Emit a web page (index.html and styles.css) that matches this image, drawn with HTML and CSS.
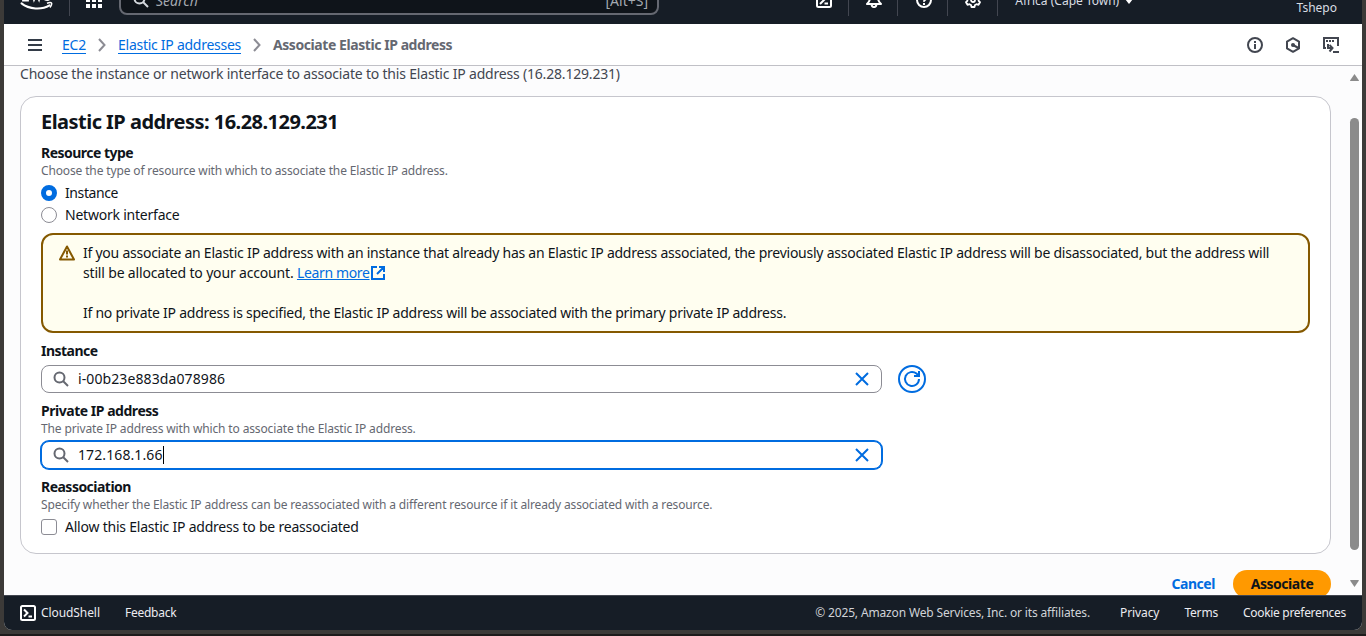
FILE: index.html
```
<!DOCTYPE html>
<html lang="en">
<head>
<meta charset="utf-8">
<title>Associate Elastic IP address | EC2</title>
<link rel="stylesheet" href="styles.css">
</head>
<body>
<div class="window">
  <nav class="nav">
    <div class="nav-row">
      <svg class="nav-logo" width="34" height="22" viewBox="0 0 34 22"><path d="M3 4v7.500h5V4M12 4l2 7 2.500-6 2.500 6 2-7M24 10q4 2.500 6-.5" fill="none" stroke="#fff" stroke-width="1.800"/><path d="M1.500 14.400C9 20.500 22 21 29.500 16.300" fill="none" stroke="#fff" stroke-width="2" stroke-linecap="round"/><path d="M27 14.300c2-.8 4-.8 4.500-.3s0 2.800-1.600 4.500" fill="none" stroke="#fff" stroke-width="1.500"/></svg>
      <span class="sep sep-logo"></span>
      <svg class="nav-grid" width="16" height="16" viewBox="0 0 16 16" fill="#fff"><path d="M0 0h4v4H0zM6 0h4v4H6zM12 0h4v4h-4zM0 6h4v4H0zM6 6h4v4H6zM12 6h4v4h-4zM0 12h4v4H0zM6 12h4v4H6zM12 12h4v4h-4z"/></svg>
      <div class="nav-search">
        <svg width="16" height="16" viewBox="0 0 16 16" fill="none" stroke="#d5d9de" stroke-width="2"><circle cx="6.500" cy="6.500" r="5"/><path d="M10 10l5 5"/></svg>
        <span class="nav-placeholder">Search</span><span class="nav-key">[Alt+S]</span>
      </div>
      <div class="nav-tools">
        <span class="tool"><svg width="16" height="16" viewBox="0 0 16 16" fill="none" stroke="#fff" stroke-width="2"><rect x="1" y="1" width="14" height="14" rx="1.500"/><path d="M4 4l4 4-4 4M8.500 11.500H12"/></svg></span>
        <span class="tool"><svg width="16" height="16" viewBox="0 0 16 16" fill="none" stroke="#fff" stroke-width="2" stroke-linejoin="round"><path d="M8 1C5 1 4 3.500 4 6c0 3-1 4-3 6h14c-2-2-3-3-3-6 0-2.500-1-5-4-5z"/><path d="M5.500 12.500C6 16 10 16 10.500 12.500"/></svg></span>
        <span class="tool"><svg width="16" height="16" viewBox="0 0 16 16" fill="none" stroke="#fff" stroke-width="2"><circle cx="8" cy="8" r="7"/><path d="M5.800 6.500C5.800 3.200 10.500 3.700 10.200 6.300 10 8 8 7.500 8 9.800M8 11v2"/></svg></span>
        <span class="tool"><svg width="16" height="16" viewBox="0 0 16 16" fill="none" stroke="#fff" stroke-width="1.800" stroke-linejoin="round"><path d="M6.500 1h3l.5 2 1.500.8 2-.6 1.500 2.600L13.600 7.200v1.600L15 10.200l-1.500 2.600-2-.6-1.500.8-.5 2h-3L6 13l-1.500-.8-2 .6L1 10.200l1.400-1.400V7.200L1 5.800l1.500-2.600 2 .6L6 3z"/><circle cx="8" cy="8" r="2"/></svg></span>
        <span class="region">Africa (Cape Town)</span><i class="caret"></i>
      </div>
      <span class="user">Tshepo</span>
    </div>
  </nav>

  <header class="crumbs">
    <svg class="menu" width="14" height="12" viewBox="0 0 14 12" fill="#333b47"><path d="M0 0h14v2H0zM0 5h14v2H0zM0 10h14v2H0z"/></svg>
    <a class="crumb ec2">EC2</a>
    <svg class="chev" width="8" height="14" viewBox="0 0 8 14"><path d="M1 1l5.500 6L1 13" fill="none" stroke="#8c8c94" stroke-width="2"/></svg>
    <a class="crumb eips">Elastic IP addresses</a>
    <svg class="chev" width="8" height="14" viewBox="0 0 8 14"><path d="M1 1l5.500 6L1 13" fill="none" stroke="#8c8c94" stroke-width="2"/></svg>
    <span class="crumb-now">Associate Elastic IP address</span>
    <div class="header-icons">
      <svg width="16" height="16" viewBox="0 0 16 16" fill="none" stroke="#424650" stroke-width="2"><circle cx="8" cy="8" r="7"/><path d="M8 4v2M8 7v5" /></svg>
      <svg width="16" height="16" viewBox="0 0 16 16" fill="none" stroke="#424650" stroke-width="2"><path d="M8 1.200l6 3.400v6.800l-6 3.400-6-3.400V4.600z" stroke-linejoin="round"/><circle cx="8" cy="8" r="2" fill="#424650" stroke="none"/><path d="M8 8l5.500 3"/></svg>
      <svg width="16" height="16" viewBox="0 0 16 16" fill="none" stroke="#424650" stroke-width="2"><path d="M3 11H1V1h14v8"/><path d="M3 4h2M6 4h2M9 4h2" /><path d="M5 7v4h4M6.500 8l3 3-3 3.500M10 15h6"/></svg>
    </div>
  </header>

  <main class="main">
    <div class="content">
      <p class="intro"><span>Choose the instance or network interface to associate to this Elastic IP address (16.28.129.231)</span></p>
      <section class="card">
        <h2>Elastic IP address: 16.28.129.231</h2>
        <h3 class="l-type">Resource type</h3>
        <p class="hint h-type">Choose the type of resource with which to associate the Elastic IP address.</p>
        <div class="choice"><i class="radio on"></i><span class="opt-instance">Instance</span></div>
        <div class="choice second"><i class="radio"></i><span>Network interface</span></div>
        <div class="alert">
          <svg width="16" height="16" viewBox="0 0 16 16" fill="none" stroke="#855900" stroke-width="2" stroke-linejoin="round"><path d="M8 1.500L15 14.500H1z"/><path d="M8 5.500v4M8 10.500v2"/></svg>
          <div class="alert-text">
            <p class="a1">If you associate an Elastic IP address with an instance that already has an Elastic IP address associated, the previously associated Elastic IP address will be disassociated, but the address will</p>
            <p><span class="a2">still be allocated to your account. </span><a class="learn">Learn more</a><svg class="ext" width="14" height="14" viewBox="0 0 14 14" fill="none" stroke="#006ce0" stroke-width="2"><path d="M6 1H1v12h12V8M8 1h5v5M13 1L6 8"/></svg></p>
            <p class="a3">If no private IP address is specified, the Elastic IP address will be associated with the primary private IP address.</p>
          </div>
        </div>
        <h3 class="l-inst">Instance</h3>
        <div class="field-row">
          <div class="field">
            <svg width="16" height="16" viewBox="0 0 16 16" fill="none" stroke="#656871" stroke-width="2"><circle cx="6.500" cy="6.500" r="5"/><path d="M10 10l5 5"/></svg>
            <span class="v-inst">i-00b23e883da078986</span>
            <svg class="clear" width="16" height="16" viewBox="0 0 16 16"><path d="M2 2l12 12M14 2L2 14" stroke="#006ce0" stroke-width="2"/></svg>
          </div>
          <div class="refresh"><svg width="18" height="18" viewBox="0 0 18 18" fill="none" stroke="#006ce0" stroke-width="2"><path d="M16 9a7 7 0 1 1-2.500-5.400L15.500 5.500M16 1v5h-5"/></svg></div>
        </div>
        <h3 class="l-priv">Private IP address</h3>
        <p class="hint h-priv">The private IP address with which to associate the Elastic IP address.</p>
        <div class="field focus">
          <svg width="16" height="16" viewBox="0 0 16 16" fill="none" stroke="#656871" stroke-width="2"><circle cx="6.500" cy="6.500" r="5"/><path d="M10 10l5 5"/></svg>
          <span class="v-ip">172.168.1.66</span><i class="cursor"></i>
          <svg class="clear" width="16" height="16" viewBox="0 0 16 16"><path d="M2 2l12 12M14 2L2 14" stroke="#006ce0" stroke-width="2"/></svg>
        </div>
        <h3 class="l-re">Reassociation</h3>
        <p class="hint h-re">Specify whether the Elastic IP address can be reassociated with a different resource if it already associated with a resource.</p>
        <div class="choice"><i class="check"></i><span class="allow">Allow this Elastic IP address to be reassociated</span></div>
      </section>
      <div class="actions"><a class="cancel">Cancel</a><span class="primary"><span>Associate</span></span></div>
    </div>
    <div class="scrollbar"><svg width="9" height="7" viewBox="0 0 9 7"><path d="M4.500 0L9 6.500Q9 7 8 7H1Q0 7 0 6.500z" fill="#8b8b8b"/></svg><div class="thumb"></div><svg width="9" height="7" viewBox="0 0 9 7"><path d="M4.500 7L9 .5Q9 0 8 0H1Q0 0 0 .5z" fill="#8b8b8b"/></svg></div>
  </main>

  <footer class="footer">
    <svg width="16" height="16" viewBox="0 0 16 16" fill="none" stroke="#fff" stroke-width="2"><rect x="1" y="1" width="14" height="14" rx="1.500"/><path d="M4 4.500L7.500 8 4 11.500M8.500 11.500H12"/></svg>
    <span class="shell">CloudShell</span><span class="feedback">Feedback</span>
    <span class="copy">© 2025, Amazon Web Services, Inc. or its affiliates.</span>
    <span class="privacy">Privacy</span><span class="terms">Terms</span><span class="cookies">Cookie preferences</span>
  </footer>
</div>
</body>
</html>
```
FILE: styles.css
```
* { box-sizing: border-box; }
body { margin: 0; height: 636px; overflow: hidden; background: #3c3a38; border-bottom: 2px solid #1d1b1b; font: 14px/20px "Noto Sans", sans-serif; color: #0f141a; }
p, h2, h3 { margin: 0; white-space: nowrap; }
svg { display: block; flex: none; }
span, a { white-space: nowrap; }
.window { margin: 0 4px; height: 630px; display: flex; flex-direction: column; background: #fcfcfd; border-radius: 0 0 8px 8px; overflow: hidden; }

.nav { flex: none; height: 24px; background: #161d26; color: #d9dde3; overflow: hidden; font-size: 12px; }
.nav-row { display: flex; align-items: center; height: 32px; margin-top: -16px; }
.nav-logo { margin: 0 0 0 16px; }
.sep-logo { width: 1px; height: 32px; background: #424650; margin-left: 15px; }
.nav-grid { margin-left: 16px; }
.nav-search { display: flex; align-items: center; width: 540px; height: 30px; margin-left: 17px; padding: 0 9px 0 12px; border: 2px solid #656871; border-radius: 8px; background: #0f141a; font-size: 14px; }
.nav-placeholder { margin: 2px 0 0 7px; font-style: italic; color: #a4a9b0; }
.nav-key { margin: 2px 0 0 auto; color: #a4a9b0; }
.nav-tools { display: flex; align-items: center; margin-left: 140px; }
.tool { display: flex; justify-content: center; align-items: center; width: 49.700px; height: 32px; padding-left: 2px; border-right: 1px solid #424650; }
.region { margin: 1px 0 0 17.500px; font-size: 12px; }
.caret { margin: 2px 0 0 6px; border: 4px solid transparent; border-top: 5px solid #fff; border-bottom: 0; }
.user { margin: 16px 25px 0 auto; }

.crumbs { flex: none; height: 42px; display: flex; align-items: center; padding: 0 23px 0 24px; background: #fff; border-bottom: 1px solid #c0c0c6; }
.crumb { margin-left: 20px; height: 18px; line-height: 18px; color: #006ce0; border-bottom: 1px solid #006ce0; }
.ec2 { letter-spacing: -.2px; }
.eips { letter-spacing: -.27px; }
.chev { margin: 0 0 0 12px; }
.chev + .crumb, .crumb-now { margin-left: 12px; }
.crumb-now { font-weight: 700; color: #656871; letter-spacing: -.43px; }
.header-icons { display: flex; gap: 22px; margin-left: auto; }

.main { flex: 1; min-height: 0; display: flex; overflow: hidden; }
.content { width: 1327px; padding-left: 16px; }
.intro { margin-top: -2px; color: #424650; letter-spacing: -.19px; }
.card { height: 458px; margin-top: 12px; padding: 13px 20px; background: #fff; border: 1px solid #c6c6cd; border-radius: 16px; }
h2 { font-size: 20px; line-height: 24px; font-weight: 700; letter-spacing: -.53px; }
h3 { font-size: 14px; line-height: 20px; font-weight: 700; margin-top: 8px; letter-spacing: -.52px; }
.l-priv { letter-spacing: -.47px; }
.card h2 + h3 { margin-top: 9px; }
.hint { font-size: 12px; line-height: 16px; color: #656871; letter-spacing: -.14px; }
.choice { display: flex; align-items: center; gap: 8px; height: 20px; margin-top: 4px; letter-spacing: -.22px; }
.opt-instance { letter-spacing: -.4px; }
.second { margin-top: 2px; }
.radio, .check { width: 16px; height: 16px; border: 1px solid #8c8c94; border-radius: 50%; background: #fff; }
.radio.on { border: 5px solid #006ce0; }
.check { border-radius: 3px; }
.alert { display: flex; height: 100px; margin-top: 8px; padding: 8px 16px; border: 2px solid #855900; border-radius: 12px; background: #fffef0; }
.alert > svg { margin-top: 2px; }
.alert-text { margin-left: 8px; letter-spacing: -.245px; }
.alert-text p { display: flex; white-space: pre; }
.a2 { white-space: pre; letter-spacing: -.17px; }
.a3 { margin-top: 20px; }
.learn { color: #006ce0; text-decoration: underline; letter-spacing: -.35px; }
.ext { margin: 3px 0 0 1px; }
.field-row { display: flex; gap: 16px; margin-top: 4px; }
.field { display: flex; align-items: center; width: 841px; height: 28px; padding: 0 11px; border: 1px solid #8c8c94; border-radius: 8px; background: #fff; }
.field > span { margin-left: 9px; letter-spacing: .1px; }
.clear { margin-left: auto; }
.focus { margin-top: 4px; border-color: #006ce0; box-shadow: 0 0 0 1px #006ce0; }
.cursor { width: 1px; height: 18px; background: #000; }
.refresh { width: 28px; height: 28px; border: 2px solid #006ce0; border-radius: 50%; display: grid; place-items: center; }
.actions { display: flex; justify-content: flex-end; align-items: center; height: 28px; margin-top: 16px; font-weight: 700; letter-spacing: -.45px; }
.cancel { color: #006ce0; margin-right: 18px; }
.primary { width: 98px; height: 28px; line-height: 28px; border-radius: 20px; background: #ff9900; text-align: center; }
.scrollbar { display: flex; flex-direction: column; margin: 8px 3px 8px auto; height: 513px; }
.thumb { width: 9px; height: 432px; margin: 37px 0 auto; border-radius: 5px; background: #8b8b8b; }

.footer { flex: none; height: 35px; display: flex; align-items: center; padding: 0 16px; background: #161d26; border-top: 1px solid #424650; color: #ebebf0; font-size: 12px; }
.shell { margin-left: 5px; letter-spacing: -.08px; }
.feedback { margin-left: 25px; letter-spacing: -.25px; }
.copy { margin-left: auto; color: #d0d3d8; letter-spacing: -.15px; }
.privacy { margin-left: 30px; letter-spacing: -.08px; }
.terms, .cookies { margin-left: 25px; letter-spacing: -.3px; }
.terms { letter-spacing: -.2px; }
```
